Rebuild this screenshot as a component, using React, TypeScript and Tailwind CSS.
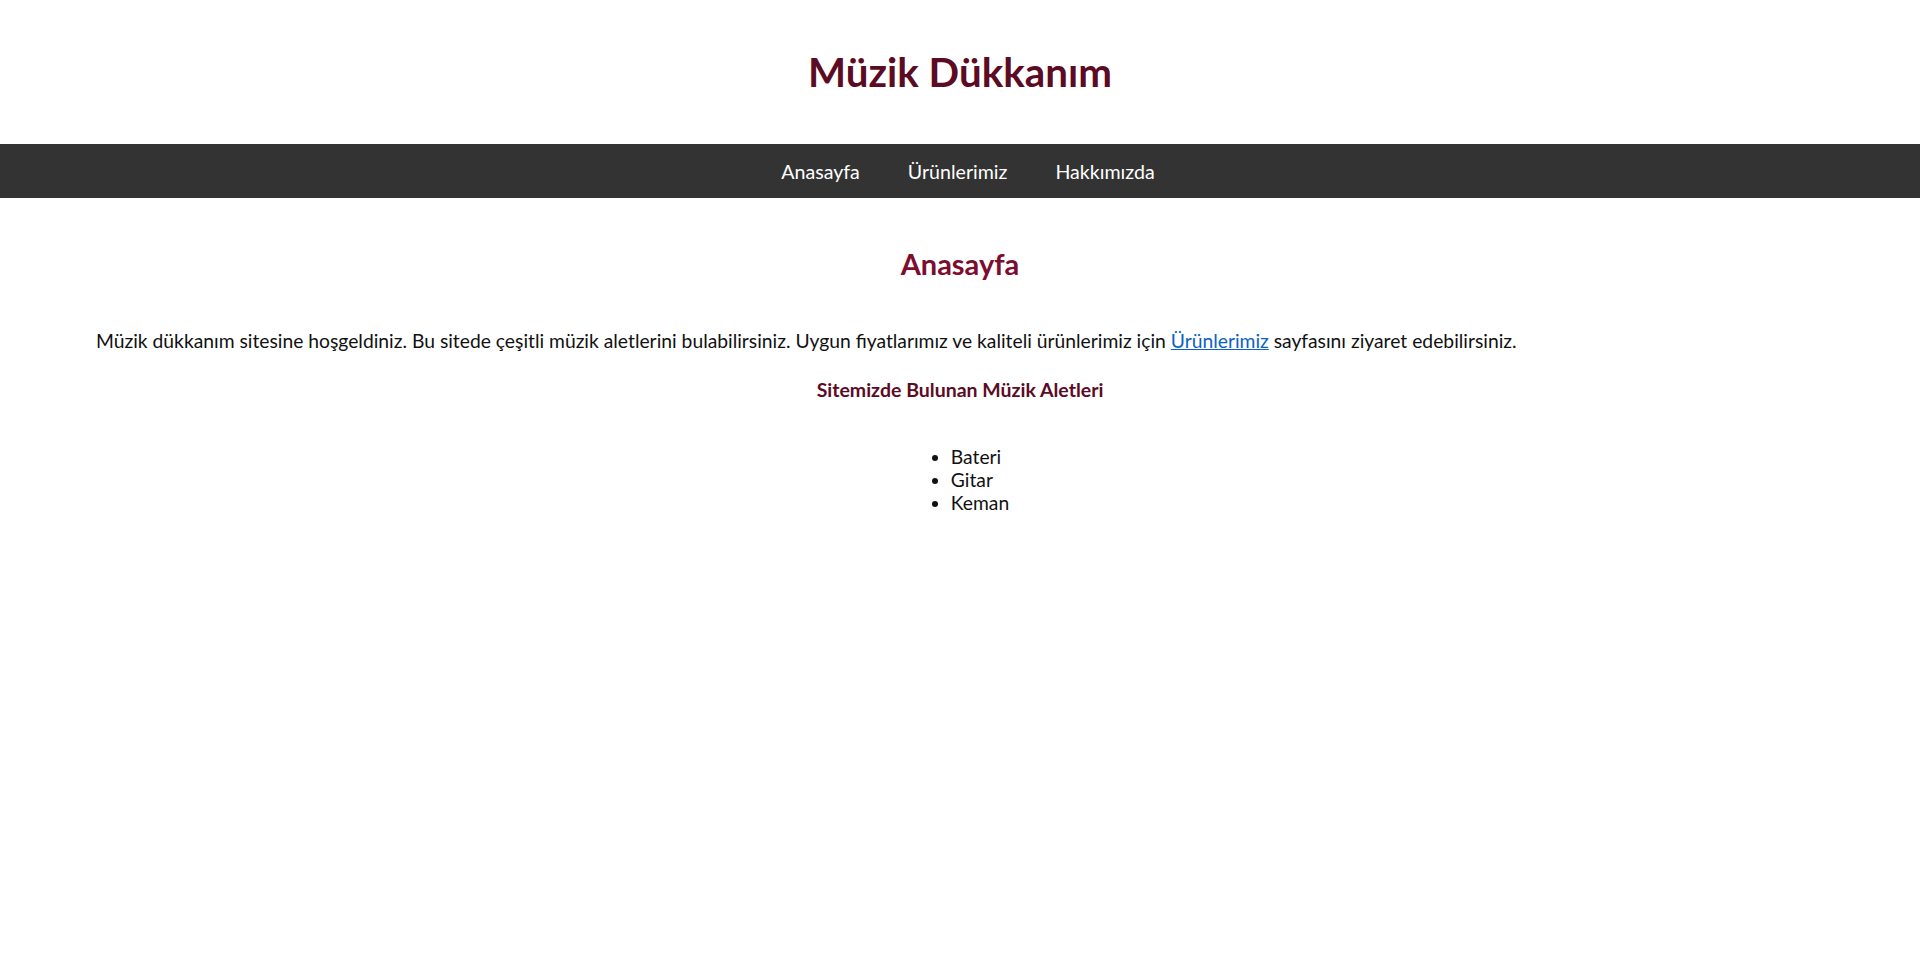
import React from 'react';

export default function App() {
  const navItems = ['Anasayfa', 'Ürünlerimiz', 'Hakkımızda'];
  const instruments = ['Bateri', 'Gitar', 'Keman'];

  return (
    <div className="min-h-screen bg-white font-['Lato',sans-serif] text-[#111]">
      <header className="h-[144px] flex items-center justify-center">
        <h1 className="text-[40.3px] leading-[1.2] font-bold text-[#5c0b24]">Müzik Dükkanım</h1>
      </header>

      <nav className="h-[54px] bg-[#333333] flex items-center justify-center pl-[16px] pt-[2px]">
        {navItems.map((item) => (
          <a key={item} href="#" className="px-6 text-[19.6px] text-white">
            {item}
          </a>
        ))}
      </nav>

      <main className="px-[96px]">
        <h2 className="mt-[50px] text-center text-[29px] leading-[32px] font-bold text-[#7d0c2e]">Anasayfa</h2>

        <p className="mt-[47px] text-[19.3px] leading-[27px]">
          Müzik dükkanım sitesine hoşgeldiniz. Bu sitede çeşitli müzik aletlerini bulabilirsiniz. Uygun fiyatlarımız ve kaliteli ürünlerimiz için{' '}
          <a href="#" className="text-[#0b62c4] underline">Ürünlerimiz</a> sayfasını ziyaret edebilirsiniz.
        </p>

        <h3 className="mt-[22px] text-center text-[19.5px] leading-[27px] font-bold text-[#5c0b24]">Sitemizde Bulunan Müzik Aletleri</h3>

        <div className="mt-[42px] flex justify-center">
          <ul className="list-disc pl-10 text-[19.3px] leading-[23px]">
            {instruments.map((name) => (
              <li key={name}>{name}</li>
            ))}
          </ul>
        </div>
      </main>
    </div>
  );
}
